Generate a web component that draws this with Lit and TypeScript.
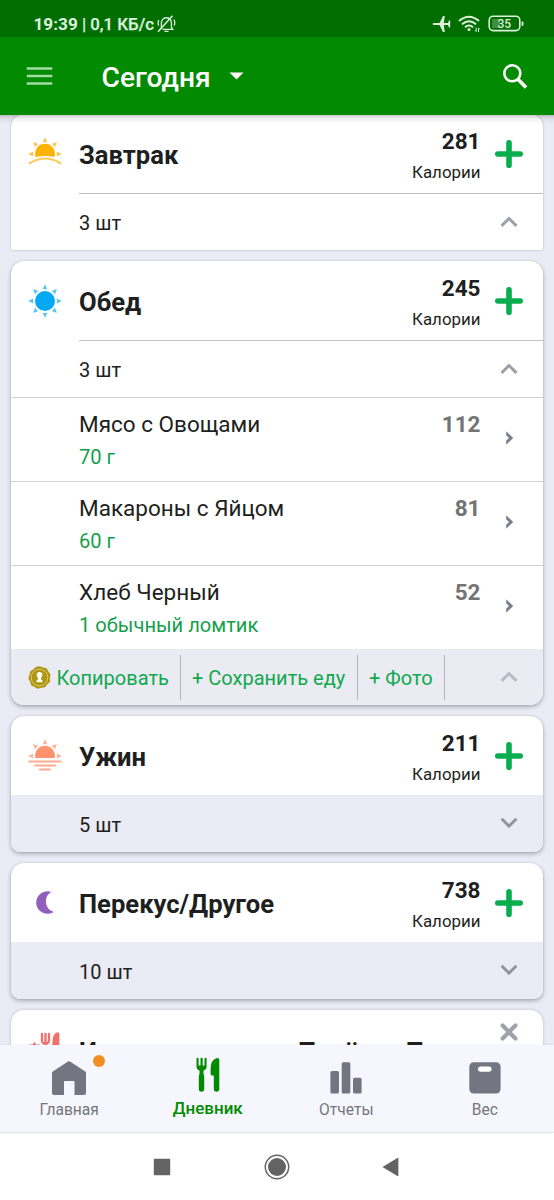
import { LitElement, html, svg, css, nothing } from "lit";
import { customElement, property } from "lit/decorators.js";
import { classMap } from "lit/directives/class-map.js";

type Food = { name: string; serving: string; kcal: number };
type Meal = {
  title: string;
  icon: string;
  kcal: number;
  count: number;
  open: boolean;
  foods: Food[];
  square?: boolean;
};

const meals: Meal[] = [
  { title: "Завтрак", icon: "sunrise", kcal: 281, count: 3, open: true, foods: [], square: true },
  {
    title: "Обед",
    icon: "sun",
    kcal: 245,
    count: 3,
    open: true,
    foods: [
      { name: "Мясо с Овощами", serving: "70 г", kcal: 112 },
      { name: "Макароны с Яйцом", serving: "60 г", kcal: 81 },
      { name: "Хлеб Черный", serving: "1 обычный ломтик", kcal: 52 },
    ],
  },
  { title: "Ужин", icon: "sunset", kcal: 211, count: 5, open: false, foods: [] },
  { title: "Перекус/Другое", icon: "moon", kcal: 738, count: 10, open: false, foods: [] },
];

const rays = (angles: number[], color: string) =>
  angles.map(
    (a) => svg`<path d="M-2.4 -11.6 L0 -16.8 L2.4 -11.6 Q0 -12.6 -2.4 -11.6Z" fill=${color} transform=${`translate(18 18) rotate(${a})`}/>`
  );

const mealIcons: Record<string, unknown> = {
  sunrise: svg`
    ${rays([-90, -45, 0, 45, 90], "#fcc44c")}
    <path d="M8.7 21 A9.9 9.9 0 1 1 27.3 21 Q18 19 8.7 21Z" fill="#ffb300"/>
    <path d="M2.6 27.2 Q18 17.8 33.4 27.2" fill="none" stroke="#fcc95c" stroke-width="2.2" stroke-linecap="round"/>`,
  sun: svg`
    ${rays([0, 45, 90, 135, 180, 225, 270, 315], "#55c3f5")}
    <circle cx="18" cy="18" r="10" fill="#03a9f4"/>`,
  sunset: svg`
    ${rays([-90, -45, 0, 45, 90], "#ffb197")}
    <path d="M8.4 20 A9.9 9.9 0 1 1 27.6 20Z" fill="#ff9370"/>
    <path d="M2.2 23.4H33.8M8 27.4H28M13 31.4H23" stroke="#ffab90" stroke-width="2" stroke-linecap="round"/>`,
  moon: svg`<path d="M24.3 6.9 A11.3 11.3 0 1 0 26.8 26.9 A11 11 0 0 1 24.3 6.9Z" fill="#9160bd"/>`,
  custom: svg`
    <path d="M7.6 16.8 L9 19.6H12.6V36H2V19.6H5.8Z" fill="#ee716b"/>
    <path d="M15 9v6.5a3 3 0 0 0 3 3h1a3 3 0 0 0 3-3V9M18.5 9v24" fill="none" stroke="#ee716b" stroke-width="2.3" stroke-linecap="round"/>
    <path d="M32.4 36V9Q32.4 7 30.6 7.2Q25.4 8.4 25.4 18V23H28V36Z" fill="#ee716b"/>`,
};

const chevron = (up: boolean) => html`<svg width="18" height="12" viewBox="0 0 18 12">
  <path d=${up ? "M1.6 9.9 9 2.5 16.4 9.9" : "M1.6 1.8 9 9.2 16.4 1.8"} fill="none" stroke="currentColor" stroke-width="3" />
</svg>`;

@customElement("meal-card")
export class MealCard extends LitElement {
  @property({ attribute: false }) meal!: Meal;

  static styles = css`
    :host { display: block; }
    .card {
      background: #fff;
      border-radius: 13px;
      box-shadow: 0 2px 4px rgba(40, 40, 50, 0.32), 0 0 2px rgba(40, 40, 50, 0.16);
      overflow: hidden;
    }
    .square { border-radius: 13px 13px 0 0; box-shadow: 0 0 2px rgba(40, 40, 50, 0.38); }
    .closed { border-radius: 13px 13px 9px 9px; }
    .head { display: flex; height: 79px; align-items: center; }
    .icon { width: 36px; height: 36px; margin: 0 16px; flex: none; }
    .title {
      flex: 1;
      font-size: 25.6px;
      line-height: 30px;
      font-weight: 700;
      padding-top: 3px;
    }
    .energy { display: flex; flex-direction: column; align-items: flex-end; padding-top: 1px; }
    .kcal { font-size: 22.5px; line-height: 30px; font-weight: 700; }
    .unit { font-size: 16.9px; line-height: 22px; padding-top: 5px; }
    .add { width: 28px; height: 28px; margin: 0 20px 0 14.5px; }
    .summary {
      display: flex;
      height: 56px;
      align-items: center;
      padding: 0 25px 0 68px;
      font-size: 20px;
      justify-content: space-between;
      color: #212121;
    }
    .count { padding-top: 1px; }
    .shaded .count { padding-top: 3px; }
    .summary svg { color: #9d9fa7; margin-bottom: 1px; }
    .rule { height: 1px; margin-left: 68px; background: #c0c0c2; }
    .shaded { background: #ebebf5; height: 57px; }
    .summary.shaded svg { color: #9194a0; }
    .food {
      display: flex;
      height: 84px;
      box-sizing: border-box;
      border-top: 1.5px solid #cfd0d2;
      padding: 11px 29.5px 0 68px;
    }
    .what { flex: 1; }
    .name { font-size: 22.5px; line-height: 30px; }
    .serving { font-size: 20.1px; line-height: 26px; padding-top: 5px; color: #149f4c; }
    .amount { font-size: 22.5px; line-height: 30px; font-weight: 700; color: #737373; width: 60px; text-align: right; }
    .go { margin: 21.5px 0 0 24px; width: 9px; height: 14px; }
    .actions {
      display: flex;
      height: 56px;
      background: #ebebf3;
      align-items: center;
      padding-right: 25px;
      font-size: 20px;
      color: #11a84e;
    }
    .action {
      display: flex;
      align-items: center;
      height: 45px;
      border-right: 1.3px solid #b5b6bf;
      padding: 0 11px;
      box-sizing: border-box;
      white-space: nowrap;
    }
    .action span { padding-top: 2px; }
    .copy { padding-left: 17px; padding-right: 0; gap: 5.5px; width: 170px; }
    .save { width: 177px; }
    .photo { width: 87px; }
    .actions .collapse { margin-left: auto; color: #b9bac4; display: flex; }
  `;

  render() {
    const m = this.meal;
    return html`<section
      class=${classMap({ card: true, square: !!m.square, closed: !m.open })}
    >
      <div class="head">
        <svg class="icon" viewBox="0 0 36 36">${mealIcons[m.icon]}</svg>
        <div class="title">${m.title}</div>
        <div class="energy">
          <div class="kcal">${m.kcal}</div>
          <div class="unit">Калории</div>
        </div>
        <svg class="add" viewBox="0 0 28 28">
          <path d="M14 2.8V25.2M2.8 14H25.2" stroke="#08ad4d" stroke-width="5.6" stroke-linecap="round" />
        </svg>
      </div>
      ${m.open ? html`<div class="rule"></div>` : nothing}
      <div class=${classMap({ summary: true, shaded: !m.open })}>
        <span class="count">${m.count} шт</span>${chevron(m.open)}
      </div>
      ${m.foods.map(
        (f) => html`<div class="food">
          <div class="what">
            <div class="name">${f.name}</div>
            <div class="serving">${f.serving}</div>
          </div>
          <div class="amount">${f.kcal}</div>
          <svg class="go" viewBox="0 0 9 14">
            <path d="M1.2 .2 8.2 7 1.2 13.8V9.7L4 7 1.2 4.3Z" fill="#7c7f89" />
          </svg>
        </div>`
      )}
      ${m.foods.length
        ? html`<div class="actions">
            <div class="action copy">
              <svg width="23" height="23" viewBox="-11.5 -11.5 23 23">
                <path
                  d="M0-11.3 3.4-10 7-9.3 8.9-6 11-3 10.4 .6 10.6 4.3 7.8 6.8 5.5 9.8 1.9 10.2 -1.9 11.2 -5 9.4 -8.4 7.8 -9.3 4.3 -11.2 1.1 -10-2.4 -9.4-6 -6.2-8 -3.7-10.6Z"
                  fill="#b0960f"
                />
                <circle r="8.4" fill="none" stroke="#ddd08a" stroke-width=".9" />
                <path
                  d="M0-5.6A2.9 2.9 0 0 1 1.7 -.3L1.7 2.6H2.9V4.8H-2.9V2.6H-1.7L-1.7 -.3A2.9 2.9 0 0 1 0-5.6Z"
                  fill="#fff"
                />
              </svg>
              <span>Копировать</span>
            </div>
            <div class="action save"><span>+ Сохранить еду</span></div>
            <div class="action photo"><span>+ Фото</span></div>
            <span class="collapse">${chevron(true)}</span>
          </div>`
        : nothing}
    </section>`;
  }
}

@customElement("app-root")
export class AppRoot extends LitElement {
  static styles = css`
    :host {
      display: flex;
      flex-direction: column;
      width: 554px;
      height: 1200px;
      overflow: hidden;
      background: #ebebf5;
      color: #1e1f20;
      font-family: Roboto, "Noto Sans", sans-serif;
    }
    .status {
      height: 37px;
      flex: none;
      display: flex;
      align-items: center;
      background: #006e00;
      color: #dcf0dc;
      padding: 10px 30px 0 33.5px;
      box-sizing: border-box;
      font-size: 16.8px;
      font-weight: 500;
    }
    .clock { font-weight: 700; font-size: 17.2px; white-space: pre; }
    .rate { white-space: pre; -webkit-text-stroke: 0.25px currentColor; }
    .bell { margin-left: 3.5px; }
    .tray { margin-left: auto; display: flex; align-items: center; gap: 7px; }
    .bar {
      height: 78px;
      flex: none;
      display: flex;
      align-items: center;
      background: #028a00;
      color: #fff;
      padding: 0 26px;
      position: relative;
    }
    .day { font-size: 28.2px; font-weight: 500; margin-left: 48.5px; padding-top: 3px; }
    .caret { margin-left: 18.5px; }
    .search { margin-left: auto; }
    .feed {
      flex: 1;
      min-height: 0;
      overflow: hidden;
      position: relative;
    }
    .list {
      display: flex;
      flex-direction: column;
      gap: 11px;
      padding: 0 11px;
      margin-top: -1px;
    }
    .fade {
      position: absolute;
      inset: 0 0 auto 0;
      height: 9px;
      background: linear-gradient(rgba(0, 0, 0, 0.2), rgba(0, 0, 0, 0.06) 40%, rgba(0, 0, 0, 0));
    }
    .custom {
      flex: none;
      height: 79px;
      display: flex;
      background: #fff;
      border-radius: 13px;
      box-shadow: 0 0 3px rgba(40, 40, 50, 0.25);
    }
    .custom-icon { width: 36px; height: 36px; margin: 15px 16px 0; }
    .custom-title { font-size: 25.6px; line-height: 30px; font-weight: 700; padding-top: 26.5px; flex: 1; white-space: nowrap; }
    .close { margin: 13px 25px 0 0; }
    .tabs {
      flex: none;
      height: 88px;
      box-sizing: border-box;
      display: grid;
      grid-template-columns: repeat(4, 1fr);
      background: #f6f7fe;
      border-bottom: 1px solid #e3e4e8;
      box-shadow: 0 0 2px rgba(80, 80, 110, 0.12);
      position: relative;
    }
    .tab {
      display: flex;
      flex-direction: column;
      align-items: center;
      color: #737680;
      font-size: 15.6px;
      padding-top: 12px;
    }
    .glyph { position: relative; width: 36px; height: 40px; }
    .label { line-height: 22px; padding-top: 1.5px; color: #75767b; }
    .active, .active .label { color: #028a00; }
    .active .label { font-size: 17px; font-weight: 500; padding-top: 0; }
    .dot {
      position: absolute;
      left: 42px;
      top: -2px;
      width: 12px;
      height: 12px;
      border-radius: 50%;
      background: #f28f24;
    }
    .system {
      flex: none;
      height: 67px;
      display: flex;
      align-items: center;
      justify-content: center;
      gap: 93px;
      background: #fff;
    }
    .back { margin-left: -1px; margin-right: 1px; }
  `;

  private tab(label: string, glyph: unknown, active = false, dot = false) {
    return html`<div class=${classMap({ tab: true, active })}>
      <div class="glyph">
        <svg width="36" height="40" viewBox="0 0 36 40" fill="currentColor">${glyph}</svg>
        ${dot ? html`<span class="dot"></span>` : nothing}
      </div>
      <div class="label">${label}</div>
    </div>`;
  }

  render() {
    return html`
      <header class="status">
        <span class="clock">19:39</span><span class="rate"> | 0,1 КБ/с</span>
        <svg class="bell" width="19" height="18" viewBox="0 0 19 18" fill="none" stroke="currentColor" stroke-width="1.3">
          <path d="M4.4 14V8A5 5 0 0 1 14.4 7.5V12L15.8 14.3H5.5M7.5 16.4H11.5M1.8 5Q.6 7.6 1.6 10.6M16.8 4.5Q18.6 7.2 17.2 10.6" />
          <path d="M15.5 .8 1 16.8" stroke-width="1.5" />
        </svg>
        <div class="tray">
          <svg width="19" height="18" viewBox="0 0 19 18" fill="currentColor">
            <path d="M.5 9Q.8 8 2 8H7.5L11 1H12.8L11.8 8H16L17 5.5H18.2V12.5H17L16 10H11.8L12.8 17H11L7.5 10H2Q.8 10 .5 9Z" />
          </svg>
          <svg width="23" height="18" viewBox="0 0 23 18" fill="none" stroke="currentColor" stroke-width="2">
            <path d="M1 6Q11 -2.5 21 6M4 9.2Q11 3.2 18 9.2M7 12.2Q11 8.8 15 12.2" />
            <circle cx="11" cy="14.6" r="1.5" fill="currentColor" stroke="none" />
            <path d="M18.2 12.5V16.5L17 15.3M20.5 17V13L21.7 14.2" stroke-width="1" />
          </svg>
          <svg width="36" height="17" viewBox="0 0 36 17">
            <rect x="1.2" y="1.2" width="30.6" height="14.4" rx="4" fill="none" stroke="currentColor" stroke-width="1.6" />
            <rect x="4" y="4" width="8" height="9" rx="1" fill="#3f8f3f" />
            <rect x="33.6" y="6.5" width="1.8" height="4.5" rx=".8" fill="currentColor" />
            <text x="16.3" y="12.7" text-anchor="middle" font-size="12" font-weight="500" fill="currentColor">35</text>
          </svg>
        </div>
      </header>

      <nav class="bar">
        <svg width="27" height="18" viewBox="0 0 27 18">
          <path d="M.7 1.6H26.3M.7 9H26.3M.7 16.4H26.3" stroke="#a2dda2" stroke-width="2.5" />
        </svg>
        <span class="day">Сегодня</span>
        <svg class="caret" width="15" height="8" viewBox="0 0 15 8"><path d="M.5 .5H14.5L7.5 7.5Z" fill="#fff" /></svg>
        <svg class="search" width="26" height="26" viewBox="0 0 26 26" fill="none" stroke="#fff">
          <circle cx="10.3" cy="10.3" r="8" stroke-width="2.6" />
          <path d="M16 16.2 24 24.4" stroke-width="3.6" />
        </svg>
      </nav>

      <main class="feed">
        <div class="list">
          ${meals.map((m) => html`<meal-card .meal=${m}></meal-card>`)}
          <section class="custom">
            <svg class="custom-icon" viewBox="0 0 36 36">${mealIcons.custom}</svg>
            <div class="custom-title">Индивидуальные Приёмы Пищи</div>
            <svg class="close" width="18" height="18" viewBox="0 0 18 18">
              <path d="M2.6 2.6 15.4 15.4M15.4 2.6 2.6 15.4" stroke="#a0a2aa" stroke-width="4.2" stroke-linecap="round" />
            </svg>
          </section>
        </div>
        <div class="fade"></div>
      </main>

      <nav class="tabs">
        ${this.tab(
          "Главная",
          svg`<path d="M17 4.5Q18 3.8 19 4.5L35 15V36Q35 38 33 38H23.5V25Q23.5 24 22.5 24H14Q13 24 13 25V38H3Q1 38 1 36V15Z"/>`,
          false,
          true
        )}
        ${this.tab(
          "Дневник",
          svg`<path d="M6.5 1.2V9.5Q6.5 12.5 9.5 13.5V17Q8.8 18 8.8 19.5V32Q8.8 34.8 11.5 34.8Q14.2 34.8 14.2 32V19.5Q14.2 18 13.5 17V13.5Q16.6 12.5 16.6 9.5V1.2Q15.5 .2 14.5 1.2V8.5H12.7V1.2Q11.6 .2 10.5 1.2V8.5H8.6V1.2Q7.5 .2 6.5 1.2Z"/>
          <path d="M29.3 3V32Q29.3 34.8 26.6 34.8Q23.8 34.8 23.8 32V18.5H22Q20.6 18.5 20.6 16.5V12Q20.6 2.5 27.2 1Q29.3 .8 29.3 3Z"/>`,
          true
        )}
        ${this.tab(
          "Отчеты",
          svg`<rect x="2.4" y="14" width="8.6" height="22.6" rx="1.5"/><rect x="13.7" y="5.3" width="8.6" height="31.3" rx="1.5"/><rect x="25" y="20.8" width="8.6" height="15.8" rx="1.5"/>`
        )}
        ${this.tab(
          "Вес",
          svg`<rect x="2.3" y="5.2" width="31.3" height="31.3" rx="4.5"/><rect x="11" y="9.4" width="13.6" height="5.4" rx="2.7" fill="#fff"/>`
        )}
      </nav>

      <footer class="system">
        <svg width="18" height="18" viewBox="0 0 18 18"><rect x=".8" y=".8" width="16.4" height="16.4" rx="1" fill="#636363" /></svg>
        <svg width="26" height="26" viewBox="0 0 26 26">
          <circle cx="13" cy="13" r="11.7" fill="none" stroke="#636363" stroke-width="1.5" />
          <circle cx="13" cy="13" r="9" fill="#636363" />
        </svg>
        <svg class="back" width="18" height="20" viewBox="0 0 18 20"><path d="M.5 10 15.4 1Q16.4 .6 16.4 1.6V18.4Q16.4 19.4 15.4 19Z" fill="#636363" /></svg>
      </footer>
    `;
  }
}
